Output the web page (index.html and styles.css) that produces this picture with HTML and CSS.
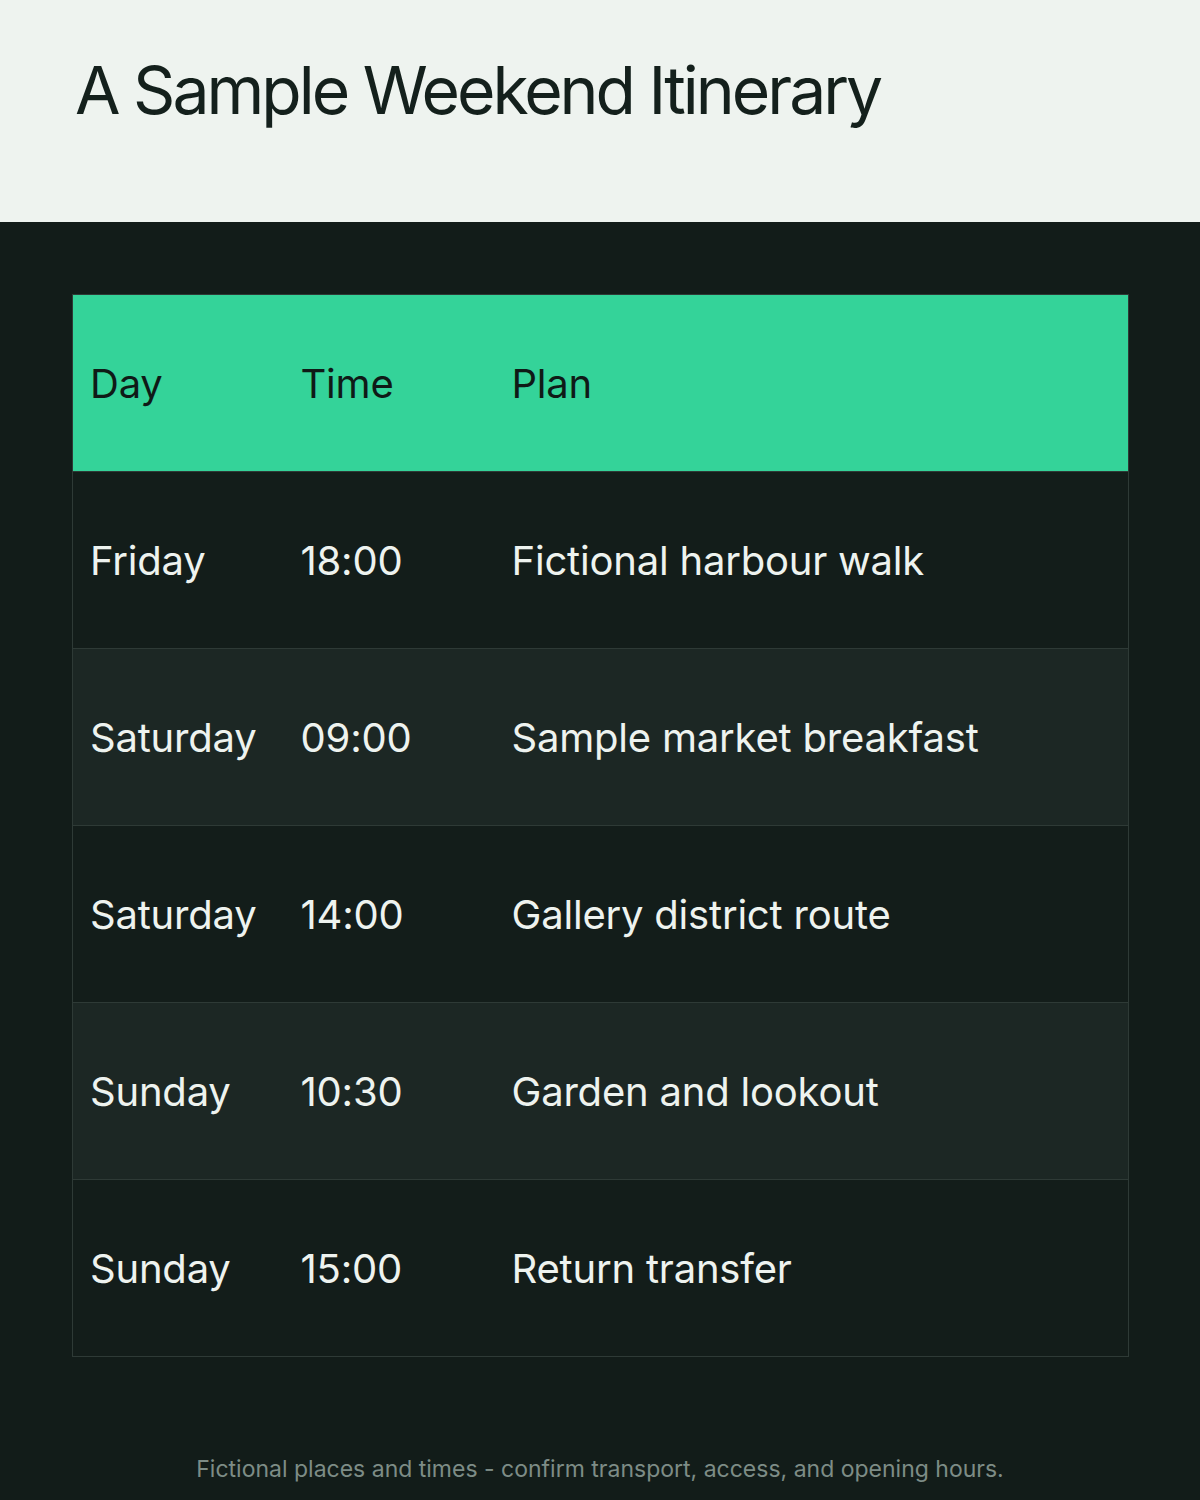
FILE: index.html
```html
<!DOCTYPE html>
<html lang="en">
<head>
<meta charset="utf-8">
<title>A Sample Weekend Itinerary</title>
<link rel="stylesheet" href="styles.css">
</head>
<body>
<header class="top">
  <h1 class="title">A Sample Weekend Itinerary</h1>
</header>
<main class="content">
  <table class="plan">
    <thead>
      <tr><th>Day</th><th>Time</th><th>Plan</th></tr>
    </thead>
    <tbody>
      <tr><td>Friday</td><td>18:00</td><td>Fictional harbour walk</td></tr>
      <tr><td>Saturday</td><td>09:00</td><td>Sample market breakfast</td></tr>
      <tr><td>Saturday</td><td>14:00</td><td>Gallery district route</td></tr>
      <tr><td>Sunday</td><td>10:30</td><td>Garden and lookout</td></tr>
      <tr><td>Sunday</td><td>15:00</td><td>Return transfer</td></tr>
    </tbody>
  </table>
  <p class="note">Fictional places and times - confirm transport, access, and opening hours.</p>
</main>
</body>
</html>
```
FILE: styles.css
```css
html, body {
  margin: 0;
  padding: 0;
}
body {
  width: 1200px;
  height: 1500px;
  background: #121c19;
  font-family: Inter, "Noto Sans", sans-serif;
  overflow: hidden;
}
.top {
  background: #eef3ef;
  height: 222px;
  box-sizing: border-box;
  padding: 52px 0 0 75px;
}
.title {
  margin: 0;
  font-weight: 400;
  font-size: 66px;
  line-height: 76px;
  letter-spacing: -3px;
  color: #14201c;
}
.content {
  padding: 72px 72px 0 72px;
}
.plan {
  width: 1057px;
  border-collapse: collapse;
  table-layout: fixed;
}
.plan th, .plan td {
  height: 177px;
  box-sizing: border-box;
  padding: 0 0 0 17px;
  text-align: left;
  vertical-align: middle;
  font-size: 40px;
  font-weight: 400;
  letter-spacing: -0.2px;
  border: 1px solid #2e3a36;
  border-left: none;
  border-right: none;
}
.plan th:first-child, .plan td:first-child { width: 211px; border-left: 1px solid #2e3a36; }
.plan th:nth-child(2), .plan td:nth-child(2) { width: 211px; }
.plan th:last-child, .plan td:last-child { border-right: 1px solid #2e3a36; }
.plan th {
  background: #34d399;
  color: #0f1a17;
}
.plan td {
  color: #eef3ef;
}
.plan tbody tr:nth-child(odd) td { background: #131d1a; }
.plan tbody tr:nth-child(even) td { background: #1c2724; }
.note {
  margin: 98px 0 0 0;
  text-align: center;
  font-size: 23px;
  color: #7d8c86;
}
```
